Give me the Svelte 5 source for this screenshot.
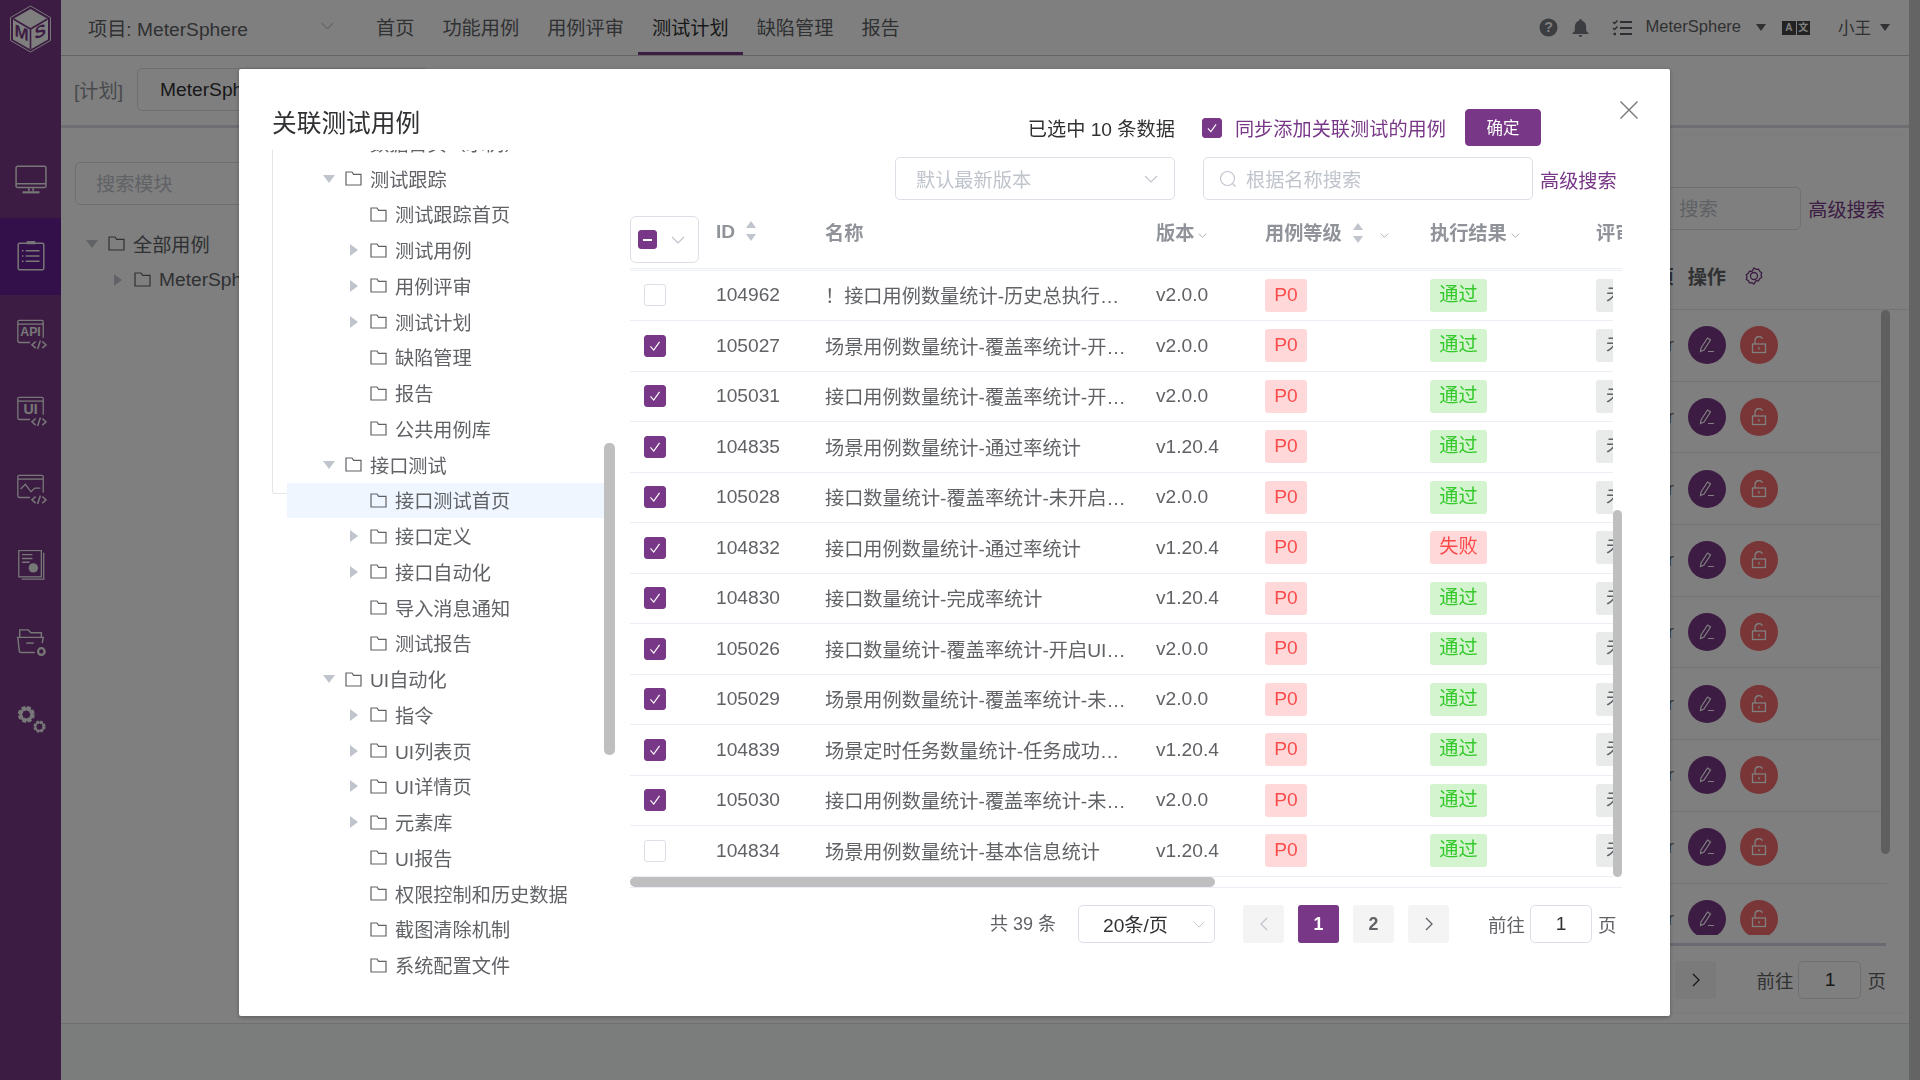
<script>
  const nav = ["首页", "功能用例", "用例评审", "测试计划", "缺陷管理", "报告"];

  const tree = [
    { name: "数据首页（示例）", level: 1 },
    { name: "测试跟踪", level: 1, caret: "down" },
    { name: "测试跟踪首页", level: 2 },
    { name: "测试用例", level: 2, caret: "right" },
    { name: "用例评审", level: 2, caret: "right" },
    { name: "测试计划", level: 2, caret: "right" },
    { name: "缺陷管理", level: 2 },
    { name: "报告", level: 2 },
    { name: "公共用例库", level: 2 },
    { name: "接口测试", level: 1, caret: "down" },
    { name: "接口测试首页", level: 2, active: true },
    { name: "接口定义", level: 2, caret: "right" },
    { name: "接口自动化", level: 2, caret: "right" },
    { name: "导入消息通知", level: 2 },
    { name: "测试报告", level: 2 },
    { name: "UI自动化", level: 1, caret: "down" },
    { name: "指令", level: 2, caret: "right" },
    { name: "UI列表页", level: 2, caret: "right" },
    { name: "UI详情页", level: 2, caret: "right" },
    { name: "元素库", level: 2, caret: "right" },
    { name: "UI报告", level: 2 },
    { name: "权限控制和历史数据", level: 2 },
    { name: "截图清除机制", level: 2 },
    { name: "系统配置文件", level: 2 }
  ];

  const cases = [
    { id: 104962, name: "！接口用例数量统计-历史总执行次数统计", ver: "v2.0.0", on: false },
    { id: 105027, name: "场景用例数量统计-覆盖率统计-开启场景", ver: "v2.0.0", on: true },
    { id: 105031, name: "接口用例数量统计-覆盖率统计-开启用例", ver: "v2.0.0", on: true },
    { id: 104835, name: "场景用例数量统计-通过率统计", ver: "v1.20.4", on: true },
    { id: 105028, name: "接口数量统计-覆盖率统计-未开启用例", ver: "v2.0.0", on: true },
    { id: 104832, name: "接口用例数量统计-通过率统计", ver: "v1.20.4", on: true, fail: true },
    { id: 104830, name: "接口数量统计-完成率统计", ver: "v1.20.4", on: true },
    { id: 105026, name: "接口数量统计-覆盖率统计-开启UI用例", ver: "v2.0.0", on: true },
    { id: 105029, name: "场景用例数量统计-覆盖率统计-未开启", ver: "v2.0.0", on: true },
    { id: 104839, name: "场景定时任务数量统计-任务成功率统计", ver: "v1.20.4", on: true },
    { id: 105030, name: "接口用例数量统计-覆盖率统计-未开启", ver: "v2.0.0", on: true },
    { id: 104834, name: "场景用例数量统计-基本信息统计", ver: "v1.20.4", on: false }
  ];

  const bgRows = [0, 1, 2, 3, 4, 5, 6, 7, 8];
</script>

{#snippet folder()}
  <svg class="folder" viewBox="0 0 17 15" fill="none" stroke="#606266" stroke-width="1.2">
    <path d="M1 1h6l1.6 2.4H16V14H1z" />
  </svg>
{/snippet}

{#snippet chevron(cls, color = "#c0c4cc")}
  <svg class={cls} viewBox="0 0 14 8" fill="none" stroke={color} stroke-width="1.1">
    <path d="M1 1l6 6 6-6" />
  </svg>
{/snippet}

{#snippet sort()}
  <span class="sort"><i class="up"></i><i class="down"></i></span>
{/snippet}

{#snippet check()}
  <svg viewBox="0 0 22 22" fill="none" stroke="#fff" stroke-width="1.3"><path d="M6 11.5l3.6 4L16 6.5" /></svg>
{/snippet}

{#snippet codeMark()}
  <path d="M22 25l-4 3.500 4 3.500M29 25l4 3.500-4 3.500M27 24l-3 9" stroke-width="1.600" />
{/snippet}

{#snippet screen()}
  <path d="M16 26H4.500A1.500 1.500 0 0 1 3 24.500V4A1.500 1.500 0 0 1 4.500 2.500h24A1.500 1.500 0 0 1 30 4v17" /><path d="M3 6.500h27" />
{/snippet}

<div class="app">
  <aside class="side">
    <div class="logo">
      <svg viewBox="0 0 60 60" width="61" height="60">
        <path d="M30 6l20 11.500v23L30 52 10 40.500V17.500z" fill="none" stroke="#f0f0f0" stroke-width="1" />
        <path d="M30 9l17.500 10v20.500L30 49.500 12.500 39.500V19z" fill="#fff" />
        <path d="M13 19l17 10 17-10M30 29v20" fill="none" stroke="#783887" stroke-width="1.600" />
        <text x="14" y="37" class="logo-m" transform="skewY(22) translate(0 -7)">M</text>
        <text x="34" y="37" class="logo-s" transform="skewY(-24) translate(0 18)">S</text>
      </svg>
    </div>
    <div class="side-gap"></div>
    <div class="side-item">
      <svg viewBox="0 -1 30 28" fill="none" stroke="#eee" stroke-width="1.400">
        <rect x="1" y="1" width="28" height="20" rx="1.500" /><path d="M1 17.500h28M13 21v3.500M17 21v3.500" /><path d="M7 25.500h16" stroke-width="2" />
      </svg>
    </div>
    <div class="side-item active">
      <svg viewBox="0 1 30 30" fill="none" stroke="#eee" stroke-width="1.400">
        <rect x="3" y="4" width="24" height="25" rx="1.500" /><path d="M11 3.500h8" stroke-width="3" /><path d="M10 11h13M10 16h13M10 21h13" /><path d="M6.500 11h1.500M6.500 16h1.500M6.500 21h1.500" />
      </svg>
    </div>
    <div class="side-item">
      <svg viewBox="0 0 34 34" fill="none" stroke="#eee" stroke-width="1.400">
        {@render screen()}
        <text x="16.500" y="19.500" class="side-txt">API</text>
        {@render codeMark()}
      </svg>
    </div>
    <div class="side-item">
      <svg viewBox="0 0 34 34" fill="none" stroke="#eee" stroke-width="1.400">
        {@render screen()}
        <text x="16.500" y="20" class="side-txt big">UI</text>
        {@render codeMark()}
      </svg>
    </div>
    <div class="side-item">
      <svg viewBox="0 0 34 34" fill="none" stroke="#eee" stroke-width="1.400">
        {@render screen()}
        <path d="M6 17l5-5 6 8 4-4h6" />
        {@render codeMark()}
      </svg>
    </div>
    <div class="side-item">
      <svg viewBox="0 1 34 34" fill="none" stroke="#eee" stroke-width="1.400">
        <rect x="4" y="1.500" width="24" height="28" /><path d="M30.500 4v28H7" />
        <path d="M7.500 6h11M7.500 10h11M7.500 14h8" />
        <circle cx="19.500" cy="20" r="5" fill="#eee" stroke="none" />
      </svg>
    </div>
    <div class="side-item">
      <svg viewBox="0 2 34 34" fill="none" stroke="#eee" stroke-width="1.500">
        <path d="M5 12V4h9l3 3h11v5" /><path d="M2 12h28l-1 6M3 12l1.500 14a2 2 0 0 0 2 2H21" /><path d="M12 18h8" />
        <circle cx="28" cy="27" r="3.500" stroke-width="2.400" />
      </svg>
    </div>
    <div class="side-item">
      <svg viewBox="0 2 34 34" fill="none" stroke="#eee">
        <circle cx="12" cy="12" r="6.500" stroke-width="5" stroke-dasharray="3.500 1.600" />
        <circle cx="12" cy="12" r="6" stroke-width="3" />
        <circle cx="26" cy="25" r="4.800" stroke-width="3.400" stroke-dasharray="2.400 1.400" />
        <circle cx="26" cy="25" r="4.500" stroke-width="2" />
      </svg>
    </div>
  </aside>

  <div class="main">
    <header class="top">
      <div class="project">
        <span>项目: MeterSphere</span>
        {@render chevron("project-chev")}
      </div>
      <nav class="nav">
        {#each nav as item}
          <span class="nav-item" class:active={item === "测试计划"}>{item}</span>
        {/each}
      </nav>
      <div class="top-right">
        <svg class="tr-help" viewBox="0 0 20 20"><circle cx="10" cy="10" r="9.500" fill="#777a80" /><text x="10" y="15" class="q">?</text></svg>
        <svg class="tr-bell" viewBox="0 0 18 20" fill="#777a80"><path d="M9 .5a1.500 1.500 0 0 1 1.500 1.700C13.500 3 15 5.500 15 9v4l2.500 2.500v.8H.5v-.8L3 13V9c0-3.500 1.500-6 4.500-6.800A1.500 1.500 0 0 1 9 .5zM7 17.500h4a2 2 0 0 1-4 0z" /></svg>
        <svg class="tr-list" viewBox="0 0 20 16" fill="none" stroke="#5a5d63" stroke-width="2"><path d="M8 2h12M8 8h12M8 14h12" /><path d="M1 2l1.500 1.500L5.500 .5M1 8l1.500 1.500L5.500 6.500" stroke-width="1.500" /><path d="M1.500 14h2.500" stroke-width="2.400" /></svg>
        <span class="tr-name">MeterSphere</span>
        <i class="tri"></i>
        <span class="lang"><b>A</b><b>文</b></span>
        <span class="tr-user">小王</span>
        <i class="tri last"></i>
      </div>
    </header>

    <div class="tabs">
      <span class="tab-label">[计划]</span>
      <div class="tab-box">MeterSphere</div>
    </div>

    <div class="content">
      <div class="aside">
        <div class="aside-search">搜索模块</div>
        <div class="aside-row root"><i class="caret down"></i>{@render folder()}<span>全部用例</span></div>
        <div class="aside-row sub"><i class="caret right"></i>{@render folder()}<span>MeterSphere</span></div>
      </div>
      <div class="card">
        <div class="card-tools">
          <div class="card-search">搜索</div>
          <span class="link">高级搜索</span>
        </div>
        <div class="card-head">
          <span class="col-text">选项</span>
          <span class="ops">操作</span>
          <svg class="gear" viewBox="0 0 18 18" fill="none" stroke="#783887" stroke-width="1.300">
            <path d="M9 1l2 1.300 2.500-.2 1.200 2.200 2 1.400-.7 2.300.7 2.300-2 1.400-1.200 2.200-2.500-.2L9 17l-2-1.300-2.500.2-1.200-2.200-2-1.400.7-2.300-.7-2.300 2-1.400 1.200-2.200 2.500.2z" />
            <circle cx="9" cy="9" r="3.500" />
          </svg>
        </div>
        <div class="card-rows">
          {#each bgRows as _}
            <div class="card-row">
              <span class="col-text thin">Administrator</span>
              <span class="circle purple">
                <svg viewBox="0 0 18 18" fill="none" stroke="#fff" stroke-width="1.200"><path d="M3 12L9.500 2l3 2L6 14l-3.500 1.500zM10 15.500h6" /></svg>
              </span>
              <span class="circle red">
                <svg viewBox="0 0 18 18" fill="none" stroke="#fff" stroke-width="1.300"><rect x="2.500" y="8" width="13" height="8.500" /><path d="M5 8V4.500a4 4 0 0 1 7.500-1.800M9 11v2.500" /></svg>
              </span>
            </div>
          {/each}
          <i class="bar card-bar"></i>
        </div>
        <div class="card-foot">
          <span class="pg-btn"><svg viewBox="0 0 8 14" fill="none" stroke="#303133" stroke-width="1.300"><path d="M1 1l6 6-6 6" /></svg></span>
          <span class="goto">前往</span>
          <span class="pg-input">1</span>
          <span class="goto">页</span>
        </div>
      </div>
    </div>
    <div class="foot"></div>
  </div>
  <div class="page-bar"></div>
</div>

<div class="overlay">
  <div class="modal">
    <svg class="close" viewBox="0 0 20 20" fill="none" stroke="#777" stroke-width="1.400"><path d="M1.500 1.500l17 17M18.500 1.500l-17 17" /></svg>
    <div class="left-col">
      <h2>关联测试用例</h2>
      <div class="tree">
        <i class="tree-edge"></i>
        <div class="tree-inner">
          {#each tree as node}
            <div class="node" class:selected={node.active} class:deep={node.level === 2}>
              {#if node.caret}<i class="caret {node.caret}"></i>{:else}<i class="caret"></i>{/if}
              {@render folder()}
              <span>{node.name}</span>
            </div>
          {/each}
        </div>
        <i class="bar tree-bar"></i>
      </div>
    </div>

    <div class="right-col">
      <div class="actions">
        <span class="picked">已选中 10 条数据</span>
        <span class="box on small">{@render check()}</span>
        <span class="sync">同步添加关联测试的用例</span>
        <button class="ok">确定</button>
      </div>
      <div class="filters">
        <div class="field version"><span>默认最新版本</span>{@render chevron("field-chev")}</div>
        <div class="field search">
          <svg viewBox="0 0 18 18" fill="none" stroke="#c0c4cc" stroke-width="1.200"><circle cx="8.500" cy="8.500" r="7" /><path d="M13.500 13.500l3 3" /></svg>
          <span>根据名称搜索</span>
        </div>
        <span class="link">高级搜索</span>
      </div>

      <div class="table">
        <div class="thead">
          <div class="cell c-sel"><div class="sel-box"><span class="box on ind"><i></i></span>{@render chevron("sel-chev")}</div></div>
          <div class="cell c-id">ID{@render sort()}</div>
          <div class="cell c-name">名称</div>
          <div class="cell c-ver">版本{@render chevron("th-chev", "#909399")}</div>
          <div class="cell c-lvl">用例等级{@render sort()}{@render chevron("th-chev wide", "#909399")}</div>
          <div class="cell c-res">执行结果{@render chevron("th-chev", "#909399")}</div>
          <div class="cell c-rev">评审状态</div>
        </div>
        <div class="tbody">
          {#each cases as row}
            <div class="tr">
              <div class="cell c-sel"><span class="box" class:on={row.on}>{#if row.on}{@render check()}{/if}</span></div>
              <div class="cell c-id">{row.id}</div>
              <div class="cell c-name"><span class="ellip">{row.name}</span></div>
              <div class="cell c-ver">{row.ver}</div>
              <div class="cell c-lvl"><span class="tag p0">P0</span></div>
              <div class="cell c-res"><span class="tag" class:pass={!row.fail} class:fail={row.fail}>{row.fail ? "失败" : "通过"}</span></div>
              <div class="cell c-rev"><span class="tag none">未评审</span></div>
            </div>
          {/each}
          <i class="bar table-bar"></i>
        </div>
        <div class="hscroll"><i></i></div>
      </div>

      <div class="pager">
        <span class="total">共 39 条</span>
        <div class="field size"><span>20条/页</span>{@render chevron("size-chev")}</div>
        <span class="pg-btn dim"><svg viewBox="0 0 8 14" fill="none" stroke="#c0c4cc" stroke-width="1.300"><path d="M7 1L1 7l6 6" /></svg></span>
        <span class="pg-btn cur">1</span>
        <span class="pg-btn">2</span>
        <span class="pg-btn"><svg viewBox="0 0 8 14" fill="none" stroke="#606266" stroke-width="1.300"><path d="M1 1l6 6-6 6" /></svg></span>
        <span class="goto first">前往</span>
        <span class="pg-input">1</span>
        <span class="goto">页</span>
      </div>
    </div>
  </div>
</div>

<style>
  :global(body) {
    margin: 0;
    overflow: hidden;
    font-family: "Liberation Sans", "Noto Sans CJK SC", sans-serif;
    font-size: 19.2px;
    color: #606266;
  }

  .app {
    display: flex;
    width: 1920px;
    height: 1080px;
    overflow: hidden;
    background: #f6faf9;
  }

  .side {
    width: 61px;
    flex: none;
    background: #783887;
  }
  .logo {
    height: 60px;
  }
  .logo-m,
  .logo-s {
    font: bold 17px "Liberation Sans", sans-serif;
    fill: #783887;
  }
  .side-gap {
    height: 80px;
  }
  .side-item {
    height: 77.5px;
    display: flex;
    align-items: center;
    justify-content: center;
  }
  .side-item.active {
    background: #662094;
  }
  .side-item svg {
    width: 32px;
    height: 32px;
  }
  .side-txt {
    font: bold 13px "Liberation Sans", sans-serif;
    fill: #eee;
    stroke: none;
    text-anchor: middle;
  }
  .side-txt.big {
    font-size: 15px;
  }

  .main {
    flex: 1;
    min-width: 0;
    display: flex;
    flex-direction: column;
  }

  .top {
    height: 55px;
    flex: none;
    display: flex;
    align-items: center;
    background: #fff;
    border-bottom: 1px solid #c8c8c8;
  }
  .project {
    width: 301px;
    padding-left: 27px;
    box-sizing: border-box;
    display: flex;
    align-items: center;
    color: #606266;
  }
  .project-chev {
    width: 13px;
    height: 8px;
    margin-left: 73px;
    position: relative;
    top: -2px;
  }
  .nav {
    display: flex;
    height: 100%;
  }
  .nav-item {
    padding: 0 14px;
    line-height: 57px;
    box-sizing: border-box;
    height: 55px;
    color: #606266;
  }
  .nav-item.active {
    color: #303133;
    border-bottom: 3px solid #783887;
  }
  .top-right {
    margin-left: auto;
    display: flex;
    align-items: center;
    padding-right: 30px;
    font-size: 16.5px;
    color: #606266;
  }
  .tr-help {
    width: 19px;
    height: 19px;
  }
  .q {
    font: bold 15px "Liberation Sans", sans-serif;
    fill: #fff;
    text-anchor: middle;
  }
  .tr-bell {
    width: 17px;
    height: 20px;
    margin-left: 14px;
  }
  .tr-list {
    width: 20px;
    height: 16px;
    margin-left: 23px;
  }
  .tr-name {
    margin-left: 14px;
    position: relative;
    top: -1px;
  }
  .tri {
    width: 0;
    height: 0;
    margin-left: 15px;
    border-left: 5.500px solid transparent;
    border-right: 5.500px solid transparent;
    border-top: 7px solid #606266;
  }
  .tri.last {
    margin-left: 9px;
  }
  .lang {
    display: flex;
    gap: 1px;
    margin-left: 16px;
  }
  .lang b {
    width: 13.500px;
    height: 14px;
    background: #444;
    color: #fff;
    font-size: 10px;
    line-height: 14px;
    text-align: center;
  }
  .tr-user {
    margin-left: 28px;
    position: relative;
    top: -1px;
  }

  .tabs {
    height: 72px;
    flex: none;
    display: flex;
    align-items: center;
    padding: 0 13px 2px;
    background: #fff;
    border-bottom: 3px solid #dcdfe6;
    box-sizing: border-box;
  }
  .tab-label {
    color: #909399;
  }
  .tab-box {
    margin-left: 14px;
    width: 292px;
    height: 43px;
    box-sizing: border-box;
    border: 1px solid #dcdfe6;
    border-radius: 5px;
    padding-left: 22px;
    line-height: 41px;
    color: #303133;
  }

  .content {
    height: 896px;
    flex: none;
    display: flex;
    background: #fff;
    border-bottom: 1px solid #dcdfe6;
    box-sizing: border-box;
  }
  .aside {
    width: 400px;
    flex: none;
    padding: 34px 0 0 14px;
    box-sizing: border-box;
  }
  .aside-search {
    width: 300px;
    height: 43px;
    box-sizing: border-box;
    border: 1px solid #dcdfe6;
    border-radius: 5px;
    padding-left: 20px;
    line-height: 44px;
    color: #c0c4cc;
  }
  .aside-row {
    height: 35.750px;
    display: flex;
    align-items: center;
  }
  .aside-row.root {
    margin-top: 21px;
    padding-left: 11px;
  }
  .aside-row.sub {
    padding-left: 37px;
  }

  .caret {
    width: 12px;
    height: 12px;
    flex: none;
    margin-right: 10px;
    box-sizing: border-box;
  }
  .caret.down {
    width: 0;
    height: 0;
    margin-right: 10px;
    border-left: 6px solid transparent;
    border-right: 6px solid transparent;
    border-top: 8px solid #c0c4cc;
  }
  .caret.right {
    width: 0;
    height: 0;
    margin-left: 2px;
    margin-right: 12px;
    border-top: 6px solid transparent;
    border-bottom: 6px solid transparent;
    border-left: 8px solid #c0c4cc;
  }
  .folder {
    width: 17px;
    height: 15px;
    flex: none;
    margin-right: 8px;
  }

  .card {
    flex: 1;
    min-width: 0;
    margin: 7px 11px 11px 8px;
    background: #fff;
    border-radius: 4px;
    display: flex;
    flex-direction: column;
    box-shadow: 0 0 4px rgba(0, 0, 0, 0.06);
  }
  .card-tools {
    display: flex;
    justify-content: flex-end;
    align-items: center;
    padding: 52px 24px 0 0;
    gap: 7px;
  }
  .card-search {
    width: 300px;
    height: 43px;
    box-sizing: border-box;
    border: 1px solid #dcdfe6;
    border-radius: 5px;
    padding-left: 177px;
    line-height: 43px;
    white-space: nowrap;
    overflow: hidden;
    color: #c0c4cc;
  }
  .card-head {
    display: flex;
    justify-content: flex-end;
    align-items: center;
    height: 79px;
    padding: 12px 22px 0 0;
    box-sizing: border-box;
    font-weight: bold;
    color: #909399;
  }
  .ops {
    margin-left: 14px;
    color: #606266;
  }
  .gear {
    width: 18px;
    height: 18px;
    margin: 0 124px 0 19px;
  }
  .col-text {
    font-weight: bold;
    color: #606266;
  }
  .col-text.thin {
    font-weight: normal;
    width: 193px;
    text-align: right;
  }
  .card-rows {
    height: 626px;
    flex: none;
    overflow: hidden;
    position: relative;
    border-top: 1px solid #e6e6e6;
    padding-right: 22px;
    box-sizing: border-box;
  }
  .card-row {
    height: 71.700px;
    display: flex;
    align-items: center;
    justify-content: flex-end;
    padding-right: 109px;
    border-bottom: 1px solid #e6e6e6;
    box-sizing: border-box;
    gap: 14px;
  }
  .circle {
    width: 38px;
    height: 38px;
    border-radius: 50%;
    display: flex;
    align-items: center;
    justify-content: center;
    flex: none;
  }
  .circle svg {
    width: 18px;
    height: 18px;
  }
  .circle.purple {
    background: #783887;
  }
  .circle.red {
    background: #f56c6c;
  }
  .card-bar {
    top: 0;
    right: 19px;
    height: 544px;
  }
  .card-foot {
    display: flex;
    align-items: center;
    justify-content: flex-end;
    margin: 8px 23px 0 0;
    padding-top: 15px;
    border-top: 3px solid #d4d4e4;
  }
  .card-foot .pg-input {
    margin: 0 6px 0 5px;
    width: 63px;
  }
  .card-foot .pg-btn {
    margin-right: 40px;
  }

  .foot {
    flex: 1;
  }
  .page-bar {
    width: 11px;
    flex: none;
    background: #c8c8c8;
    position: absolute;
    top: 0;
    bottom: 0;
    right: 0;
  }

  .bar {
    position: absolute;
    width: 9px;
    background: #bfbfbf;
    border-radius: 5px;
  }

  .overlay {
    position: fixed;
    inset: 0;
    background: rgba(0, 0, 0, 0.5);
    padding: 69px 0 0 239px;
    box-sizing: border-box;
  }
  .modal {
    width: 1431px;
    height: 947px;
    background: #fff;
    border-radius: 2px;
    box-shadow: 0 1px 4px rgba(0, 0, 0, 0.3);
    display: flex;
    position: relative;
  }
  .close {
    position: absolute;
    top: 31px;
    right: 31px;
    width: 20px;
    height: 20px;
  }

  .left-col {
    width: 391px;
    flex: none;
    padding-left: 33px;
    box-sizing: border-box;
  }
  h2 {
    margin: 0;
    height: 81px;
    padding-top: 39px;
    box-sizing: border-box;
    font-size: 24.700px;
    line-height: 32px;
    font-weight: normal;
    color: #303133;
  }
  .tree {
    position: relative;
    height: 835px;
    overflow: hidden;
  }
  .tree-edge {
    position: absolute;
    left: 0;
    top: 0;
    width: 16px;
    height: 344px;
    border-left: 1px solid #e6e6e6;
    border-bottom: 1px solid #e6e6e6;
    border-bottom-left-radius: 3px;
    box-sizing: border-box;
  }
  .tree-inner {
    margin: -25px 0 0 15px;
    width: 317px;
    position: relative;
  }
  .node {
    height: 35.750px;
    display: flex;
    align-items: center;
    padding-left: 36px;
    box-sizing: border-box;
    white-space: nowrap;
  }
  .node.deep {
    padding-left: 61px;
  }
  .node.selected {
    background: #eff6ff;
  }
  .tree-bar {
    left: 332px;
    top: 293px;
    width: 11px;
    height: 312px;
  }

  .right-col {
    width: 992px;
    flex: none;
    display: flex;
    flex-direction: column;
  }
  .actions {
    display: flex;
    align-items: center;
    justify-content: flex-end;
    padding: 40px 81px 0 0;
    height: 77px;
    box-sizing: border-box;
  }
  .picked {
    color: #303133;
    margin-right: 27px;
  }
  .box {
    width: 22px;
    height: 22px;
    flex: none;
    box-sizing: border-box;
    border: 1px solid #dcdfe6;
    border-radius: 3px;
    background: #fff;
    display: flex;
    align-items: center;
    justify-content: center;
  }
  .box svg {
    width: 100%;
    height: 100%;
  }
  .box.on {
    background: #783887;
    border-color: #783887;
  }
  .box.small {
    width: 20px;
    height: 20px;
  }
  .box.ind {
    width: 19px;
    height: 19px;
  }
  .box.ind i {
    width: 9px;
    height: 2px;
    background: #fff;
  }
  .sync {
    color: #783887;
    margin: 0 19px 0 13px;
  }
  .ok {
    width: 76px;
    height: 37px;
    border: 1px solid #783887;
    border-radius: 4px;
    background: #783887;
    color: #fff;
    font: 16.500px "Liberation Sans", "Noto Sans CJK SC", sans-serif;
    padding: 0 0 2px;
  }

  .filters {
    display: flex;
    align-items: center;
    margin-top: 11px;
    padding-left: 265px;
    height: 43px;
  }
  .field {
    height: 43px;
    box-sizing: border-box;
    border: 1px solid #dcdfe6;
    border-radius: 5px;
    display: flex;
    align-items: center;
    background: #fff;
  }
  .version {
    width: 280px;
    padding-left: 20px;
    color: #c0c4cc;
  }
  .field-chev {
    width: 14px;
    height: 8px;
    margin-left: auto;
    margin-right: 16px;
  }
  .search {
    width: 330px;
    margin-left: 28px;
    padding-left: 15px;
    color: #c0c4cc;
  }
  .search svg {
    width: 18px;
    height: 18px;
    margin-right: 9px;
  }
  .link {
    color: #783887;
    white-space: nowrap;
  }
  .filters .link {
    margin-left: 7px;
    position: relative;
    top: 1px;
  }

  .table {
    margin-top: 5px;
    position: relative;
  }
  .thead {
    display: flex;
    height: 65.500px;
    font-weight: bold;
    color: #909399;
    overflow: hidden;
    box-sizing: border-box;
    border-bottom: 3px double #ebeef5;
  }
  .thead .cell {
    padding-top: 17px;
    align-items: flex-start;
    line-height: 24px;
  }
  .thead .c-id {
    padding-top: 15px;
  }
  .cell {
    display: flex;
    align-items: center;
    flex: none;
    white-space: nowrap;
    box-sizing: border-box;
  }
  .c-sel {
    width: 69px;
  }
  .c-id {
    width: 126px;
    padding-left: 17px;
  }
  .c-name {
    width: 331px;
  }
  .c-ver {
    width: 109px;
  }
  .c-lvl {
    width: 165px;
  }
  .c-res {
    width: 166px;
  }
  .c-rev {
    width: 120px;
  }
  .thead .c-sel {
    padding: 0;
  }
  .sel-box {
    width: 69px;
    height: 47px;
    margin-top: 11px;
    box-sizing: border-box;
    border: 1px solid #dcdfe6;
    border-radius: 6px;
    display: flex;
    align-items: center;
    padding-left: 7px;
  }
  .sel-chev {
    width: 14px;
    height: 8px;
    margin-left: 14px;
  }
  .th-chev {
    width: 9px;
    height: 5px;
    margin: 11px 0 0 4px;
  }
  .th-chev.wide {
    margin-left: 16px;
  }
  .sort {
    position: relative;
    width: 11px;
    height: 20px;
    margin: 1px 0 0 11px;
    display: inline-flex;
    flex-direction: column;
    justify-content: space-between;
  }
  .sort i {
    width: 0;
    height: 0;
    border-left: 5.500px solid transparent;
    border-right: 5.500px solid transparent;
  }
  .sort .up {
    border-bottom: 7px solid #c0c4cc;
  }
  .sort .down {
    border-top: 7px solid #c0c4cc;
  }

  .tbody {
    position: relative;
    width: 992px;
    overflow: hidden;
  }
  .tr {
    display: flex;
    width: 983px;
    height: 50.500px;
    box-sizing: border-box;
    border-bottom: 1px solid #ebeef5;
    overflow: hidden;
  }
  .tr .c-sel {
    padding-left: 14px;
  }
  .ellip {
    width: 302px;
    overflow: hidden;
    text-overflow: ellipsis;
  }
  .tag {
    height: 33px;
    line-height: 32px;
    padding: 0 9px;
    border-radius: 3px;
    box-sizing: border-box;
    text-align: center;
  }
  .tag.p0 {
    width: 42px;
    padding: 0;
    background: #ffd9d9;
    color: #fb4b4b;
  }
  .tag.pass {
    width: 57px;
    padding: 0;
    background: #d4f4cf;
    color: #33c92a;
  }
  .tag.fail {
    width: 57px;
    padding: 0;
    background: #ffd9d9;
    color: #fb4b4b;
  }
  .tag.none {
    padding: 0 10px;
    background: #e9ebeb;
    color: #606266;
  }
  .table-bar {
    right: 0;
    top: 239px;
    height: 367px;
    width: 9px;
  }
  .hscroll {
    height: 11px;
    margin-top: 0.500px;
    box-sizing: border-box;
    border-bottom: 1px solid #ebeef5;
  }
  .hscroll i {
    display: block;
    width: 585px;
    height: 10px;
    background: #bfbfbf;
    border-radius: 5px;
  }

  .pager {
    display: flex;
    align-items: center;
    margin-top: 17px;
    padding-left: 360px;
    height: 38px;
  }
  .total {
    font-size: 18px;
    width: 68px;
    white-space: nowrap;
    position: relative;
    top: -2px;
  }
  .size {
    width: 137px;
    height: 38px;
    margin-left: 20px;
    padding-left: 24px;
    color: #303133;
  }
  .size-chev {
    width: 12px;
    height: 7px;
    margin-left: auto;
    margin-right: 9px;
  }
  .pg-btn {
    width: 41px;
    height: 38px;
    border-radius: 3px;
    background: #f4f4f5;
    margin-left: 14px;
    display: flex;
    align-items: center;
    justify-content: center;
    font-weight: bold;
    font-size: 17.800px;
    flex: none;
  }
  .pager .dim {
    margin-left: 28px;
  }
  .pg-btn.cur {
    background: #783887;
    color: #fff;
  }
  .pg-btn svg {
    width: 8px;
    height: 14px;
  }
  .goto {
    font-size: 18.500px;
    white-space: nowrap;
  }
  .goto.first {
    margin-left: 39px;
  }
  .pg-input {
    width: 62px;
    height: 38px;
    box-sizing: border-box;
    margin: 0 6px 0 5px;
    border: 1px solid #dcdfe6;
    border-radius: 5px;
    line-height: 36px;
    text-align: center;
    color: #303133;
    background: #fff;
  }
</style>
